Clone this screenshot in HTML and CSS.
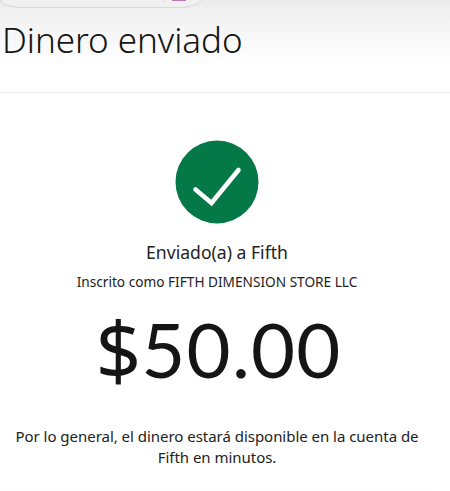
FILE: index.html
```
<!DOCTYPE html>
<html lang="es">
  <head>
    <meta charset="utf-8">
    <title>Dinero enviado</title>
    <link rel="stylesheet" href="styles.css">
  </head>
  <body>
    <header class="header">
      <div class="search">
        <span class="search-divider"></span>
        <span class="search-icon"></span>
      </div>
      <h1>Dinero enviado</h1>
    </header>

    <main class="confirmation">
      <svg class="check" viewBox="0 0 84 84">
        <circle cx="42" cy="42" r="41.5" fill="#047847" />
        <path d="M20.5 49.5 L36.5 63 L63.5 30" fill="none" stroke="#fff" stroke-width="4.6" stroke-linecap="round" stroke-linejoin="miter" />
      </svg>
      <p class="recipient">Enviado(a) a Fifth</p>
      <p class="enrolled">Inscrito como FIFTH DIMENSION STORE LLC</p>
      <p class="amount"><span class="currency">$</span>50.00</p>
      <p class="note">Por lo general, el dinero estará disponible en la cuenta de<br>Fifth en minutos.</p>
    </main>
    <div class="footer-line"></div>
  </body>
</html>
```
FILE: styles.css
```
html, body {
  padding: 0;
  margin: 0;
}
body {
  height: 491px;
  overflow: hidden;
  display: flex;
  flex-direction: column;
  background: #fff;
  color: #222;
  font-family: "Noto Sans", "Open Sans", sans-serif;
}
h1, p {
  margin: 0;
  white-space: nowrap;
}

.header {
  box-sizing: border-box;
  flex: none;
  height: 93px;
  border-bottom: 1px solid #ebebeb;
  background: linear-gradient(#ebeceb 0, #f4f4f4 25px, #fff 64px);
}
.header h1 {
  padding-left: 2px;
  margin-top: 8px;
  color: #151515;
  font-size: 35px;
  font-weight: 300;
  line-height: 48px;
  letter-spacing: -0.05px;
}
.search {
  box-sizing: border-box;
  display: flex;
  justify-content: flex-end;
  width: 201px;
  height: 8px;
  padding-right: 14px;
  border: 1px solid #d9d9d9;
  border-top: none;
  border-radius: 0 0 24px 24px / 0 0 8px 8px;
  background: #f0f0f0;
}
.search-divider {
  width: 1px;
  height: 2px;
  margin-right: 7px;
  background: #d9d9d9;
}
.search-icon {
  width: 14px;
  height: 1px;
  background: #b978b9;
}

.confirmation {
  display: flex;
  flex-direction: column;
  align-items: center;
  padding-top: 47px;
  text-align: center;
}
.check {
  width: 84px;
  height: 84px;
  margin-right: 16px;
}
.recipient {
  margin: 15px 16px 0 0;
  font-size: 17.6px;
  line-height: 26px;
}
.enrolled {
  margin: 6px 16px 0 0;
  font-size: 13.65px;
  line-height: 22px;
}
.amount {
  display: flex;
  margin: 11px 13px 0 0;
  color: #151515;
  font-family: Lato, sans-serif;
  font-size: 76px;
  line-height: 90px;
  letter-spacing: 1.2px;
}
.currency {
  margin-right: -1px;
  font-family: "Noto Sans", sans-serif;
  font-size: 80px;
}
.note {
  margin: 32px 16px 0 0;
  font-size: 15px;
  line-height: 21px;
  letter-spacing: -0.03px;
}

.footer-line {
  width: 430px;
  height: 1px;
  margin-top: 21px;
  background: #fafafa;
}
```
